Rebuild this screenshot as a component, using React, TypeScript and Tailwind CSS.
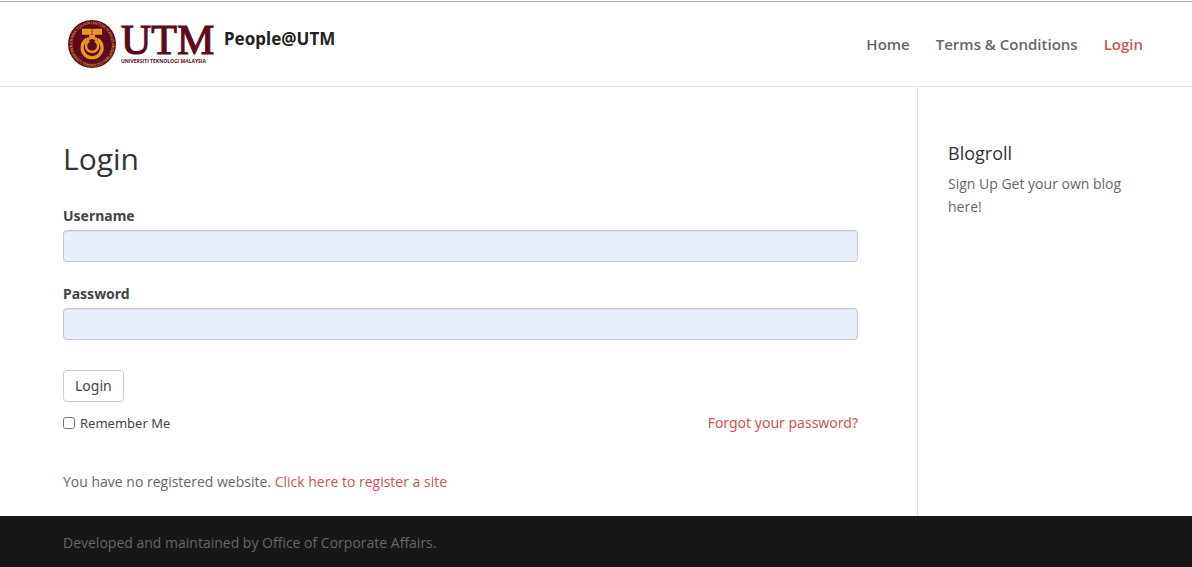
const navLinks = [
  { label: "Home", href: "#home", active: false },
  { label: "Terms & Conditions", href: "#terms", active: false },
  { label: "Login", href: "#login", active: true },
];

function Logo() {
  return (
    <svg width="146" height="50" viewBox="0 0 146 50" className="overflow-visible" role="img" aria-label="Universiti Teknologi Malaysia">
      <defs>
        <path id="ring-top" d="M5.2 30.5 A19.6 19.6 0 1 1 42.8 30.5" />
        <path id="ring-bottom" d="M1.6 28 A22.6 22.6 0 0 0 46.4 28" />
      </defs>
      <circle cx="24" cy="25" r="24" fill="#5c0a20" />
      <g fill="#d98f2b" fontSize="4" fontWeight="700" fontFamily="Lato, sans-serif" textAnchor="middle">
        <text>
          <textPath href="#ring-top" startOffset="50%">KERANA TUHAN UNTUK MANUSIA</textPath>
        </text>
        <text>
          <textPath href="#ring-bottom" startOffset="50%">UNIVERSITI TEKNOLOGI MALAYSIA</textPath>
        </text>
      </g>
      <g fill="none" stroke="#ea981f">
        <path d="M18.6 20.4 A10 10 0 1 0 29.6 20.4" strokeWidth="3.2" />
        <path d="M21.2 21.6 A6.1 6.1 0 1 0 27 21.6" strokeWidth="2.4" />
      </g>
      <path d="M14 9.8 H23.7 V15.7 H14 Z M24.3 9.8 H34 V15.7 H24.3 Z" fill="#ea981f" />
      <path d="M21.2 15.7 H27 V18.2 L30 19 L29 21.5 L24 20 L19 21.5 L18.2 19 L21.2 18.2 Z" fill="#ea981f" />
      <text
        x="53"
        y="35"
        fill="#5c0a20"
        stroke="#5c0a20"
        strokeWidth="1.2"
        fontSize="42"
        fontFamily="'Liberation Serif', serif"
      >
        UTM
      </text>
      <text x="53" y="44" fill="#5c0a20" fontSize="5" fontWeight="700" fontFamily="'Open Sans', sans-serif">
        UNIVERSITI TEKNOLOGI MALAYSIA
      </text>
    </svg>
  );
}

function Field({ id, label, type }: { id: string; label: string; type: string }) {
  return (
    <div className="mb-[21px]">
      <label htmlFor={id} className="block text-sm leading-[22px] font-bold text-[#444]">
        {label}
      </label>
      <input
        id={id}
        type={type}
        className="mt-[3px] block h-8 w-full rounded border border-[#c4c6ca] bg-[#e8f0fe] px-3 text-sm shadow-[inset_0_1px_1px_rgba(0,0,0,0.075)]"
      />
    </div>
  );
}

export default function App() {
  return (
    <div className="flex min-h-screen flex-col bg-white font-['Open_Sans',sans-serif] text-sm text-[#666]">
      <header className="mt-px flex items-center justify-between border-t border-b border-t-[#b5b5b5] border-b-[#e2e2e2] pr-[49px] pl-[68px]">
        <a href="#top" className="flex h-[84px] items-center gap-[10px]">
          <Logo />
          <span className="pb-[10px] font-['Noto_Sans',sans-serif] text-[17px] font-bold text-[#222]">People@UTM</span>
        </a>
        <nav className="flex gap-[26px] pt-[2px] text-[15px] font-semibold">
          {navLinks.map((link) => (
            <a key={link.label} href={link.href} className={link.active ? "text-[#cf5358]" : "text-[#666]"}>
              {link.label}
            </a>
          ))}
        </nav>
      </header>

      <div className="flex flex-1">
        <main className="flex-1 pt-[57px] pr-[59px] pb-5 pl-[63px]">
          <h1 className="text-[30px] leading-[30px] text-[#333]">Login</h1>

          <form className="mt-[31px] font-['Noto_Sans',sans-serif]">
            <Field id="username" label="Username" type="text" />
            <Field id="password" label="Password" type="password" />
            <button
              type="button"
              className="mt-[30px] block h-8 rounded border border-[#ccc] bg-white px-[11px] text-sm text-[#444]"
            >
              Login
            </button>
            <div className="mt-[10px] flex items-center justify-between">
              <label className="flex items-center gap-[5px] text-[13px] text-[#444]">
                <input type="checkbox" className="size-3" />
                Remember Me
              </label>
              <a href="#forgot" className="text-sm leading-[22px] text-[#cf5358]">
                Forgot your password?
              </a>
            </div>
          </form>

          <p className="mt-9 leading-6">
            You have no registered website.{" "}
            <a href="#register" className="text-[#cf5358]">
              Click here to register a site
            </a>
          </p>
        </main>

        <aside className="w-[275px] border-l border-[#e2e2e2] pt-[57px] pr-[49px] pl-[30px]">
          <h2 className="text-lg leading-[18px] text-[#333]">Blogroll</h2>
          <p className="mt-[10px] leading-[23px]">Sign Up Get your own blog here!</p>
        </aside>
      </div>

      <footer className="bg-[#171717] pt-[15px] pb-3 pl-[63px] leading-6 text-[#666]">
        Developed and maintained by Office of Corporate Affairs.
      </footer>
    </div>
  );
}
